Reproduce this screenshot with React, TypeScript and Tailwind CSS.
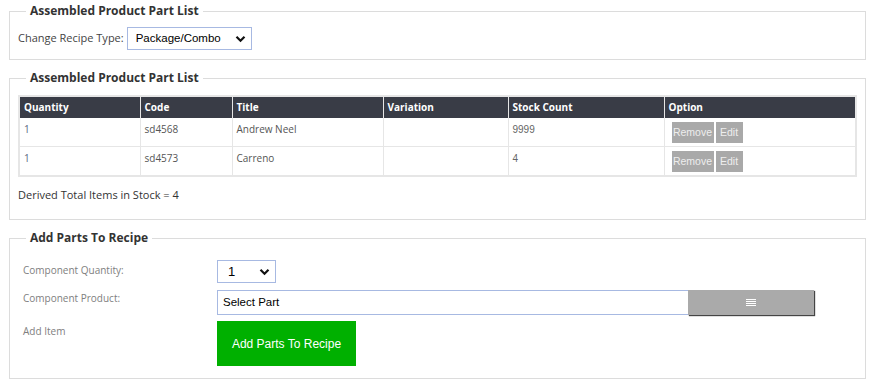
import { ReactNode } from 'react'

const parts = [
  { qty: '1', code: 'sd4568', title: 'Andrew Neel', variation: '', stock: '9999' },
  { qty: '1', code: 'sd4573', title: 'Carreno', variation: '', stock: '4' },
]

function Chevron() {
  return (
    <svg width="11" height="8" viewBox="0 0 11 8" className="pointer-events-none shrink-0">
      <path d="M1.5 1.8 L5.5 5.8 L9.5 1.8" fill="none" stroke="#111" strokeWidth="2.2" />
    </svg>
  )
}

function Box({ title, className, children }: { title: string; className?: string; children: ReactNode }) {
  return (
    <fieldset className={`border border-[#dcdcdc] ml-[9px] mr-[6px] px-[8px] ${className ?? ''}`}>
      <legend className="ml-[8px] px-[4px] text-[12px] leading-[18px] font-bold text-[#333]">{title}</legend>
      {children}
    </fieldset>
  )
}

export default function App() {
  return (
    <div className="bg-white w-[872px] h-[383px] overflow-hidden font-['Open_Sans',sans-serif] pt-[2px]">
      <Box title="Assembled Product Part List" className="pt-[7px] pb-[9px]">
        <div className="flex items-center">
          <span className="text-[11px] text-[#444] mr-[3px]">Change Recipe Type:</span>
          <div className="w-[125px] h-[23px] border border-[#a7b9e2] flex items-center justify-between pl-[8px] pr-[5px] font-['Liberation_Sans',Arial,sans-serif] text-[11.5px] text-black">
            <span>Package/Combo</span>
            <Chevron />
          </div>
        </div>
      </Box>

      <Box title="Assembled Product Part List" className="mt-[9px] pt-[8px] pb-[16px]">
        <table className="w-full border-collapse border-2 border-[#e6e6e6] text-[10px]">
          <thead>
            <tr className="bg-[#393c46] text-white">
              {[
                ['Quantity', 'w-[121px]'],
                ['Code', 'w-[92px]'],
                ['Title', 'w-[151px]'],
                ['Variation', 'w-[125px]'],
                ['Stock Count', 'w-[156px]'],
                ['Option', ''],
              ].map(([h, w]) => (
                <th key={h} className={`${w} h-[21px] text-left font-bold px-[4px] py-[3px] leading-[15px] border-r border-[#e6e6e6] last:border-r-0`}>{h}</th>
              ))}
            </tr>
          </thead>
          <tbody>
            {parts.map(p => (
              <tr key={p.code} className="border-b border-[#e6e6e6] align-top">
                <td className="px-[4px] pt-[4px] leading-[15px] text-[#5a6882] border-r border-[#e6e6e6]">{p.qty}</td>
                <td className="px-[4px] pt-[4px] leading-[15px] text-[#555] border-r border-[#e6e6e6]">{p.code}</td>
                <td className="px-[4px] pt-[4px] leading-[15px] text-[#555] border-r border-[#e6e6e6]">{p.title}</td>
                <td className="px-[4px] pt-[4px] leading-[15px] text-[#555] border-r border-[#e6e6e6]">{p.variation}</td>
                <td className="px-[4px] pt-[4px] leading-[15px] text-[#666] font-['Liberation_Sans',Arial,sans-serif] border-r border-[#e6e6e6]">{p.stock}</td>
                <td className="pl-[7px] pt-[4px] pb-[3px]">
                  <div className="flex gap-[2px] font-['Liberation_Sans',Arial,sans-serif] text-[10.5px] text-[#eee]">
                    <span className="w-[42px] h-[21px] bg-[#a9a9a9] flex items-center justify-center">Remove</span>
                    <span className="w-[27px] h-[21px] bg-[#a9a9a9] flex items-center justify-center">Edit</span>
                  </div>
                </td>
              </tr>
            ))}
          </tbody>
        </table>
        <p className="mt-[9px] text-[11px] leading-[17px] text-[#333]">Derived Total Items in Stock = 4</p>
      </Box>

      <Box title="Add Parts To Recipe" className="mt-[9px] pt-[13px] pb-[12px]">
        <div className="grid grid-cols-[194px_1fr] gap-y-[7px] pl-[5px] text-[10px] text-[#808080]">
          <span className="pt-[3px]">Component Quantity:</span>
          <div className="w-[59px] h-[23px] border border-[#a7b9e2] flex items-center justify-between pl-[10px] pr-[5px] font-['Liberation_Sans',Arial,sans-serif] text-[13px] text-black">
            <span>1</span>
            <Chevron />
          </div>

          <span className="pt-[1px]">Component Product:</span>
          <div className="flex items-start">
            <div className="w-[472px] h-[25px] border border-[#a7b9e2] flex items-center pl-[5px] font-['Liberation_Sans',Arial,sans-serif] text-[11.5px] text-black">
              Select Part
            </div>
            <div className="w-[126px] h-[25px] bg-[#aaaaaa] shadow-[1px_1px_1px_#444] flex items-center justify-center -ml-[1px]">
              <svg width="10" height="8" viewBox="0 0 10 8">
                <path d="M0 0.5H10M0 2.5H10M0 4.5H10M0 6.5H10" stroke="#fff" strokeWidth="1" />
              </svg>
            </div>
          </div>

          <span className="pt-[2px]">Add Item</span>
          <div className="-mt-[1px]">
            <div className="w-[139px] h-[45px] bg-[#00b000] flex items-center justify-center text-white font-['Liberation_Sans',Arial,sans-serif] text-[12px]">
              Add Parts To Recipe
            </div>
          </div>
        </div>
      </Box>
    </div>
  )
}
